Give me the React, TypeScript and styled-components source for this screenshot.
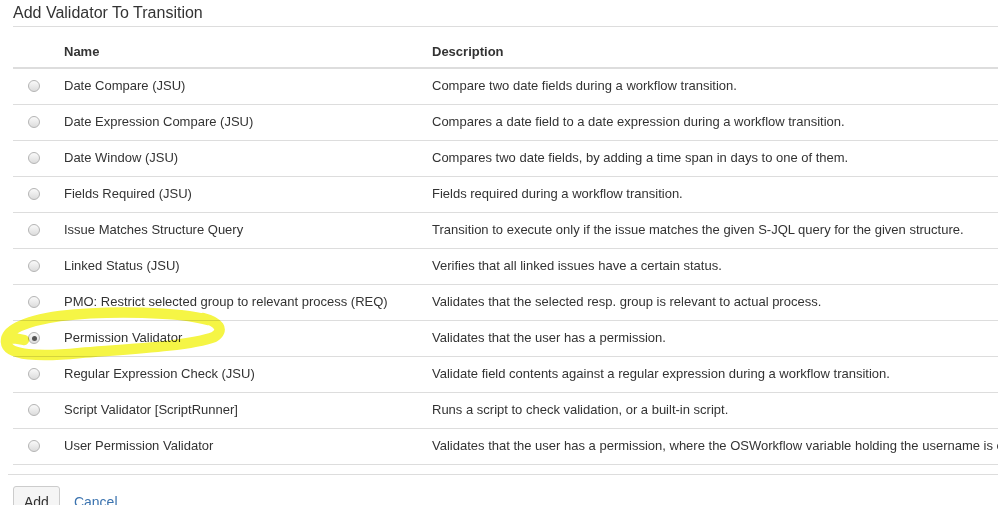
import React, { useState } from 'react';
import styled, { createGlobalStyle } from 'styled-components';

const GlobalStyle = createGlobalStyle`
    body {
        margin: 0;
        background: #fff;
        font-family: "Liberation Sans", Arial, sans-serif;
        color: #333;
    }
`

const Page = styled.div`
    position: relative;
    width: 998px;
    height: 505px;
    overflow: hidden;
    padding-left: 8px;
    box-sizing: border-box;
`

const Section = styled.div`
    padding-left: 5px;
`

const Title = styled.h2`
    margin: 0;
    font-size: 16px;
    font-weight: normal;
    line-height: 26px;
    color: #333;
    border-bottom: 1px solid #ddd;
`

const Table = styled.table`
    width: 100%;
    table-layout: fixed;
    border-collapse: collapse;
    margin-top: 9px;
    font-size: 13px;
`

const HeadCell = styled.th`
    text-align: left;
    font-weight: bold;
    padding: 7px 10px 6px 10px;
    line-height: 18px;
    border-bottom: 2px solid #ddd;
`

const Row = styled.tr`
    border-bottom: 1px solid #ddd;
`

const Cell = styled.td`
    padding: 8px 10px 9px 10px;
    line-height: 18px;
    white-space: nowrap;
    overflow: hidden;
`

const RadioCell = styled(Cell)`
    padding-left: 15px;
`

const Radio = styled.input.attrs({ type: 'radio' })`
    appearance: none;
    margin: 0;
    width: 12px;
    height: 12px;
    border-radius: 50%;
    border: 1px solid #b5b5b5;
    background: linear-gradient(#fafafa, #dcdcdc);
    display: block;
    box-sizing: border-box;
    position: relative;
    &:checked::after {
        content: '';
        position: absolute;
        left: 2.5px;
        top: 2.5px;
        width: 5px;
        height: 5px;
        border-radius: 50%;
        background: #555;
    }
`

const Footer = styled.div`
    margin-top: 9px;
    border-top: 1px solid #ddd;
    padding: 11px 0 0 5px;
    display: flex;
    align-items: center;
    gap: 14px;
`

const Button = styled.button`
    font-family: inherit;
    font-size: 14px;
    color: #333;
    background: #f5f5f5;
    border: 1px solid #ccc;
    border-radius: 3px;
    padding: 5px 10px;
    line-height: 20px;
`

const LinkButton = styled.a`
    font-size: 14px;
    color: #3b73af;
    text-decoration: none;
`

const Highlight = styled.svg`
    position: absolute;
    left: 0;
    top: 300px;
    pointer-events: none;
    mix-blend-mode: multiply;
`

const validators = [
    ['Date Compare (JSU)', 'Compare two date fields during a workflow transition.'],
    ['Date Expression Compare (JSU)', 'Compares a date field to a date expression during a workflow transition.'],
    ['Date Window (JSU)', 'Compares two date fields, by adding a time span in days to one of them.'],
    ['Fields Required (JSU)', 'Fields required during a workflow transition.'],
    ['Issue Matches Structure Query', 'Transition to execute only if the issue matches the given S-JQL query for the given structure.'],
    ['Linked Status (JSU)', 'Verifies that all linked issues have a certain status.'],
    ['PMO: Restrict selected group to relevant process (REQ)', 'Validates that the selected resp. group is relevant to actual process.'],
    ['Permission Validator', 'Validates that the user has a permission.'],
    ['Regular Expression Check (JSU)', 'Validate field contents against a regular expression during a workflow transition.'],
    ['Script Validator [ScriptRunner]', 'Runs a script to check validation, or a built-in script.'],
    ['User Permission Validator', 'Validates that the user has a permission, where the OSWorkflow variable holding the username is configured.'],
]

export default function App() {
    const [selected, setSelected] = useState(7)

    return (
        <>
            <GlobalStyle />
            <Page>
                <Section>
                    <Title>Add Validator To Transition</Title>
                    <Table>
                        <colgroup>
                            <col style={{ width: 41 }} />
                            <col style={{ width: 368 }} />
                            <col />
                        </colgroup>
                        <thead>
                            <tr>
                                <HeadCell></HeadCell>
                                <HeadCell>Name</HeadCell>
                                <HeadCell>Description</HeadCell>
                            </tr>
                        </thead>
                        <tbody>
                            {validators.map(([name, desc], i) => (
                                <Row key={name}>
                                    <RadioCell>
                                        <Radio name="validator" checked={selected === i} onChange={() => setSelected(i)} />
                                    </RadioCell>
                                    <Cell>{name}</Cell>
                                    <Cell>{desc}</Cell>
                                </Row>
                            ))}
                        </tbody>
                    </Table>
                </Section>
                <Footer>
                    <Button>Add</Button>
                    <LinkButton href="#">Cancel</LinkButton>
                </Footer>
                <Highlight width="240" height="70" viewBox="0 0 240 70">
                    <path
                        d="M 208 20 C 180 12, 110 10, 60 16 C 25 21, 5 30, 6 42 C 7 56, 40 57, 80 53 C 130 49, 190 46, 214 37 C 225 30, 219 22, 203 18 M 8 38 C 14 38, 20 39, 24 40"
                        fill="none"
                        stroke="#f5f545"
                        strokeWidth="10.5"
                        strokeLinecap="round"
                        strokeLinejoin="round"
                    />
                </Highlight>
            </Page>
        </>
    )
}
